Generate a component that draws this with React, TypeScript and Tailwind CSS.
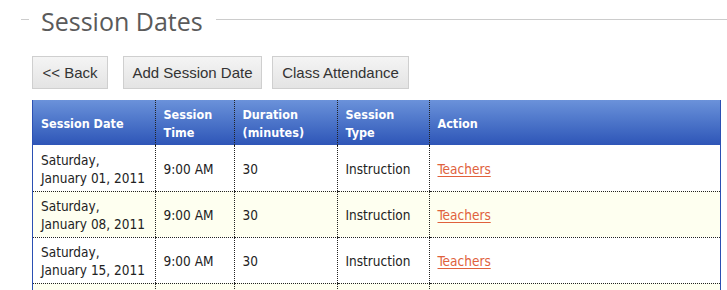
import React from "react";

const rows = [
  { date: ["Saturday,", "January 01, 2011"], bg: "bg-white" },
  { date: ["Saturday,", "January 08, 2011"], bg: "bg-[#fefff0]" },
  { date: ["Saturday,", "January 15, 2011"], bg: "bg-white" },
];

const btn =
  "h-[33px] px-0 flex items-center justify-center whitespace-nowrap border border-[#cfcfcf] bg-gradient-to-b from-[#f4f4f4] to-[#e4e4e4] text-[15px] text-[#333] font-['Liberation_Sans',Arial,sans-serif] leading-none";

const td = "px-[8px] pt-[2px] border-l border-b border-dotted border-[#222]";

export default function App() {
  return (
    <div className="w-[727px] h-[290px] overflow-hidden bg-white">
      <div className="flex h-[38px] pt-[4px]">
        <div className="ml-[21px] mt-[15px] w-[8px] h-px bg-[#cccccc]" />
        <div className="ml-[12px] text-[25px] leading-[34px] text-[#5a5a5a] font-['Open_Sans',sans-serif]">
          Session Dates
        </div>
        <div className="ml-[13px] mt-[15px] flex-1 h-px bg-[#cccccc]" />
      </div>
      <div className="flex mt-[18px] ml-[32px]">
        <button className={btn + " w-[76px]"}>&lt;&lt; Back</button>
        <button className={btn + " ml-[15px] w-[139px]"}>Add Session Date</button>
        <button className={btn + " ml-[10px] w-[137px]"}>Class Attendance</button>
      </div>
      <div className="mt-[11px] ml-[32px] w-[689px] border-x border-[#2b50b3]">
        <table className="w-full border-collapse font-['DejaVu_Sans_Condensed','DejaVu_Sans',sans-serif] text-[13.5px] leading-[18px] text-[#222]">
          <colgroup>
            <col className="w-[122px]" />
            <col className="w-[79px]" />
            <col className="w-[103px]" />
            <col className="w-[92px]" />
            <col />
          </colgroup>
          <thead>
            <tr className="h-[45px] bg-gradient-to-b from-[#6b92da] to-[#2e55b7] text-white text-left">
              {[
                ["Session Date"],
                ["Session", "Time"],
                ["Duration", "(minutes)"],
                ["Session", "Type"],
                ["Action"],
              ].map((h, i) => (
                <th
                  key={i}
                  className={
                    "px-[8px] pt-[2px] pb-0 font-bold text-[12.5px] align-middle " +
                    (i > 0 ? "border-l border-dotted border-l-[#222]" : "")
                  }
                >
                  {h.map((l, j) => (
                    <div key={j}>{l}</div>
                  ))}
                </th>
              ))}
            </tr>
          </thead>
          <tbody>
            {rows.map((r, i) => (
              <tr key={i} className={"h-[46px] " + r.bg}>
                <td className="px-[8px] pt-[2px] border-b border-dotted border-[#222] align-middle">
                  <div>{r.date[0]}</div>
                  <div>{r.date[1]}</div>
                </td>
                <td className={td}>9:00 AM</td>
                <td className={td}>30</td>
                <td className={td}>Instruction</td>
                <td className={td}>
                  <a href="#" className="text-[#e0613c] underline underline-offset-2">
                    Teachers
                  </a>
                </td>
              </tr>
            ))}
            <tr className="h-[46px] bg-[#fefff0]">
              <td className="border-b border-dotted border-[#222]" />
              <td className={td} />
              <td className={td} />
              <td className={td} />
              <td className={td} />
            </tr>
          </tbody>
        </table>
      </div>
    </div>
  );
}
